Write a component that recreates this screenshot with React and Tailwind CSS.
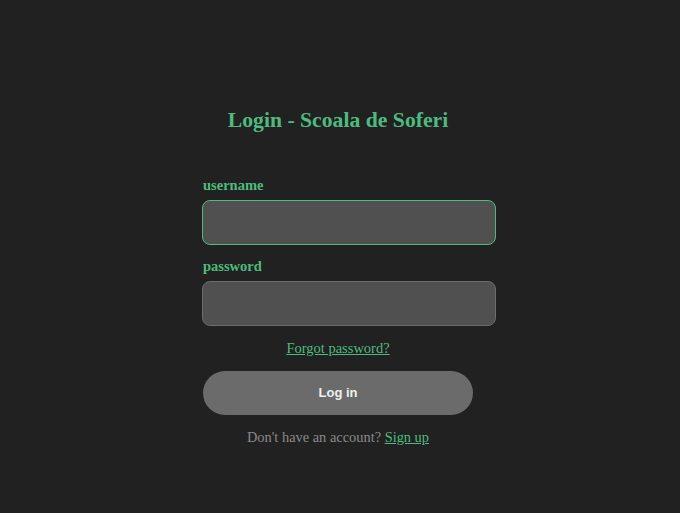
export default function App() {
    return (
        <div className="min-h-[513px] w-full bg-[#212121] font-['Liberation_Serif',serif]">
            <div className="pt-[106px] text-center">
                <h2 className="pr-[4px] text-[21.7px] font-bold leading-[28px] text-[#4dbb7f]">Login - Scoala de Soferi</h2>
            </div>
            <form className="ml-[202px] mt-[42px] w-[294px]" onSubmit={(e) => e.preventDefault()}>
                <label className="block pl-px text-[14.5px] font-bold leading-[18px] text-[#4dbb7f]">username</label>
                <input
                    autoFocus
                    type="text"
                    className="mt-[6px] block h-[45px] w-[294px] rounded-[8px] border border-[#4dbb7f] bg-[#505050] px-[11px] text-[#e5e5e5] caret-black outline-none"
                />
                <label className="mt-[12px] block pl-px text-[14.5px] font-bold leading-[18px] text-[#4dbb7f]">password</label>
                <input
                    type="password"
                    className="mt-[6px] block h-[45px] w-[294px] rounded-[8px] border border-[#6c6c6c] bg-[#505050] px-[11px] text-[#e5e5e5] outline-none"
                />
                <div className="w-[272px] pt-[10px] text-center">
                    <a href="#" className="text-[14.5px] leading-[18px] text-[#4dbb7f] underline">Forgot password?</a>
                </div>
                <button
                    type="submit"
                    className="ml-px mt-[11px] block h-[44px] w-[270px] rounded-full bg-[#6b6b6b] font-['Liberation_Sans',sans-serif] text-[13px] font-bold text-[#f0f0f0]"
                >
                    Log in
                </button>
                <p className="w-[272px] pt-[13px] text-center text-[14.4px] leading-[18px] text-[#8a8a8a]">
                    Don't have an account? <a href="#" className="text-[#4dbb7f] underline">Sign up</a>
                </p>
            </form>
        </div>
    );
}
